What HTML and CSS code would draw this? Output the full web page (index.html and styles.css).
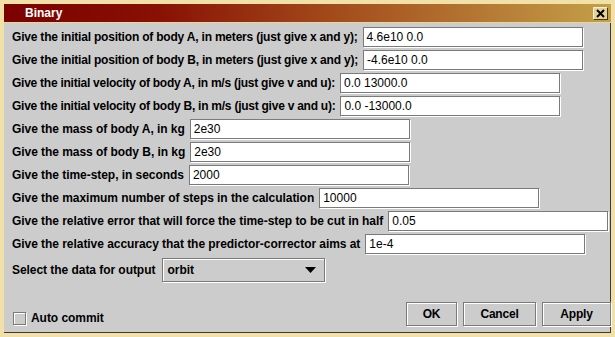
FILE: index.html
```html
<!DOCTYPE html>
<html>
<head>
<meta charset="utf-8">
<link rel="stylesheet" href="styles.css">
</head>
<body>
<div class="frame">
  <div class="titlebar">
    <span class="title">Binary</span>
    <span class="close"><svg width="9" height="9" viewBox="0 0 9 9"><path d="M1 1 L8 8 M8 1 L1 8" stroke="#000" stroke-width="2"/></svg></span>
  </div>
  <div class="content">
    <div class="form">
      <div class="row row-tight"><span class="label">Give the initial position of body A, in meters (just give x and y);</span><span class="field">4.6e10 0.0</span></div>
      <div class="row row-tight"><span class="label">Give the initial position of body B, in meters (just give x and y);</span><span class="field">-4.6e10 0.0</span></div>
      <div class="row row-tighter"><span class="label">Give the initial velocity of body A, in m/s (just give v and u):</span><span class="field">0.0 13000.0</span></div>
      <div class="row row-tighter"><span class="label">Give the initial velocity of body B, in m/s (just give v and u):</span><span class="field">0.0 -13000.0</span></div>
      <div class="row"><span class="label">Give the mass of body A, in kg</span><span class="field">2e30</span></div>
      <div class="row"><span class="label">Give the mass of body B, in kg</span><span class="field">2e30</span></div>
      <div class="row"><span class="label">Give the time-step, in seconds</span><span class="field">2000</span></div>
      <div class="row"><span class="label">Give the maximum number of steps in the calculation</span><span class="field">10000</span></div>
      <div class="row"><span class="label">Give the relative error that will force the time-step to be cut in half</span><span class="field">0.05</span></div>
      <div class="row"><span class="label">Give the relative accuracy that the predictor-corrector aims at</span><span class="field">1e-4</span></div>
      <div class="row combo-row"><span class="label">Select the data for output</span><span class="combo"><span class="combo-text">orbit</span><svg class="arrow" width="11" height="6" viewBox="0 0 11 6"><path d="M0 0 H11 L5.5 6 Z" fill="#000"/></svg></span></div>
    </div>
    <div class="footer">
      <label class="check"><span class="box"></span><span class="label">Auto commit</span></label>
      <div class="buttons">
        <span class="btn btn-ok">OK</span>
        <span class="btn btn-cancel">Cancel</span>
        <span class="btn btn-apply">Apply</span>
      </div>
    </div>
  </div>
</div>
</body>
</html>
```

FILE: styles.css
```css
html, body {
  margin: 0;
  padding: 0;
  background: #f0e0a8;
}
.frame {
  width: 615px;
  height: 337px;
  box-sizing: border-box;
  border: 4px solid #f1e1a9;
  box-shadow: inset -1px -1px 0 #3a3a3a;
  display: flex;
  flex-direction: column;
  background: #cccccc;
  font-family: "Liberation Sans", Arial, sans-serif;
  font-size: 12px;
  color: #000;
}
.titlebar {
  height: 18px;
  background: linear-gradient(to right, #7c0000 0%, #881004 25%, #a44c1c 55%, #c4a048 100%);
  display: flex;
  align-items: center;
  justify-content: space-between;
  padding: 0 3px 0 21px;
  border-bottom: 1px solid #e8d898;
}
.title {
  color: #fff;
  font-weight: bold;
  font-size: 12px;
}
.close {
  width: 15px;
  height: 13px;
  box-sizing: border-box;
  background: #e2d49c;
  border: 1px solid #4a3a10;
  border-top-color: #f8f0c8;
  border-left-color: #f8f0c8;
  display: flex;
  align-items: center;
  justify-content: center;
}
.content {
  flex: 1;
  display: flex;
  flex-direction: column;
  justify-content: space-between;
  padding: 4px 0 7px 8px;
}
.form {
  display: flex;
  flex-direction: column;
  gap: 3px;
}
.row {
  display: flex;
  align-items: center;
  gap: 5px;
  height: 20px;
}
.label {
  font-weight: bold;
  white-space: nowrap;
  letter-spacing: -0.05px;
}
.row-tight .label {
  letter-spacing: -0.2px;
}
.row-tighter .label {
  letter-spacing: -0.25px;
}
.field {
  width: 220px;
  height: 20px;
  box-sizing: border-box;
  background: #fff;
  border: 1px solid #7a7a7a;
  box-shadow: 1px 1px 0 #fff;
  padding: 0 3px;
  line-height: 18px;
  font-family: "Liberation Sans", Arial, sans-serif;
  font-size: 12px;
  white-space: nowrap;
}
.combo-row {
  margin-top: 1px;
  height: 24px;
  gap: 7px;
}
.combo {
  width: 163px;
  height: 24px;
  box-sizing: border-box;
  border: 1px solid #7a7a7a;
  box-shadow: inset 1px 1px 0 #fff, 1px 1px 0 #fff;
  display: flex;
  align-items: center;
  justify-content: space-between;
  padding: 0 8px 0 4px;
}
.combo-text {
  font-weight: bold;
}
.footer {
  display: flex;
  align-items: flex-end;
  justify-content: space-between;
  padding-right: 0;
}
.check {
  display: flex;
  align-items: center;
  gap: 5px;
  margin-left: 1px;
  margin-bottom: 1px;
}
.box {
  width: 13px;
  height: 13px;
  box-sizing: border-box;
  border: 1px solid #7a7a7a;
  box-shadow: inset 1px 1px 0 #fff, 1px 1px 0 #fff;
}
.buttons {
  display: flex;
  gap: 6px;
}
.btn {
  height: 24px;
  box-sizing: border-box;
  border: 1px solid #7a7a7a;
  box-shadow: inset 1px 1px 0 #fff, 1px 1px 0 #fff;
  display: flex;
  align-items: center;
  justify-content: center;
  font-weight: bold;
  letter-spacing: -0.2px;
}
.btn-ok { width: 51px; }
.btn-cancel { width: 73px; }
.btn-apply { width: 69px; }
```
